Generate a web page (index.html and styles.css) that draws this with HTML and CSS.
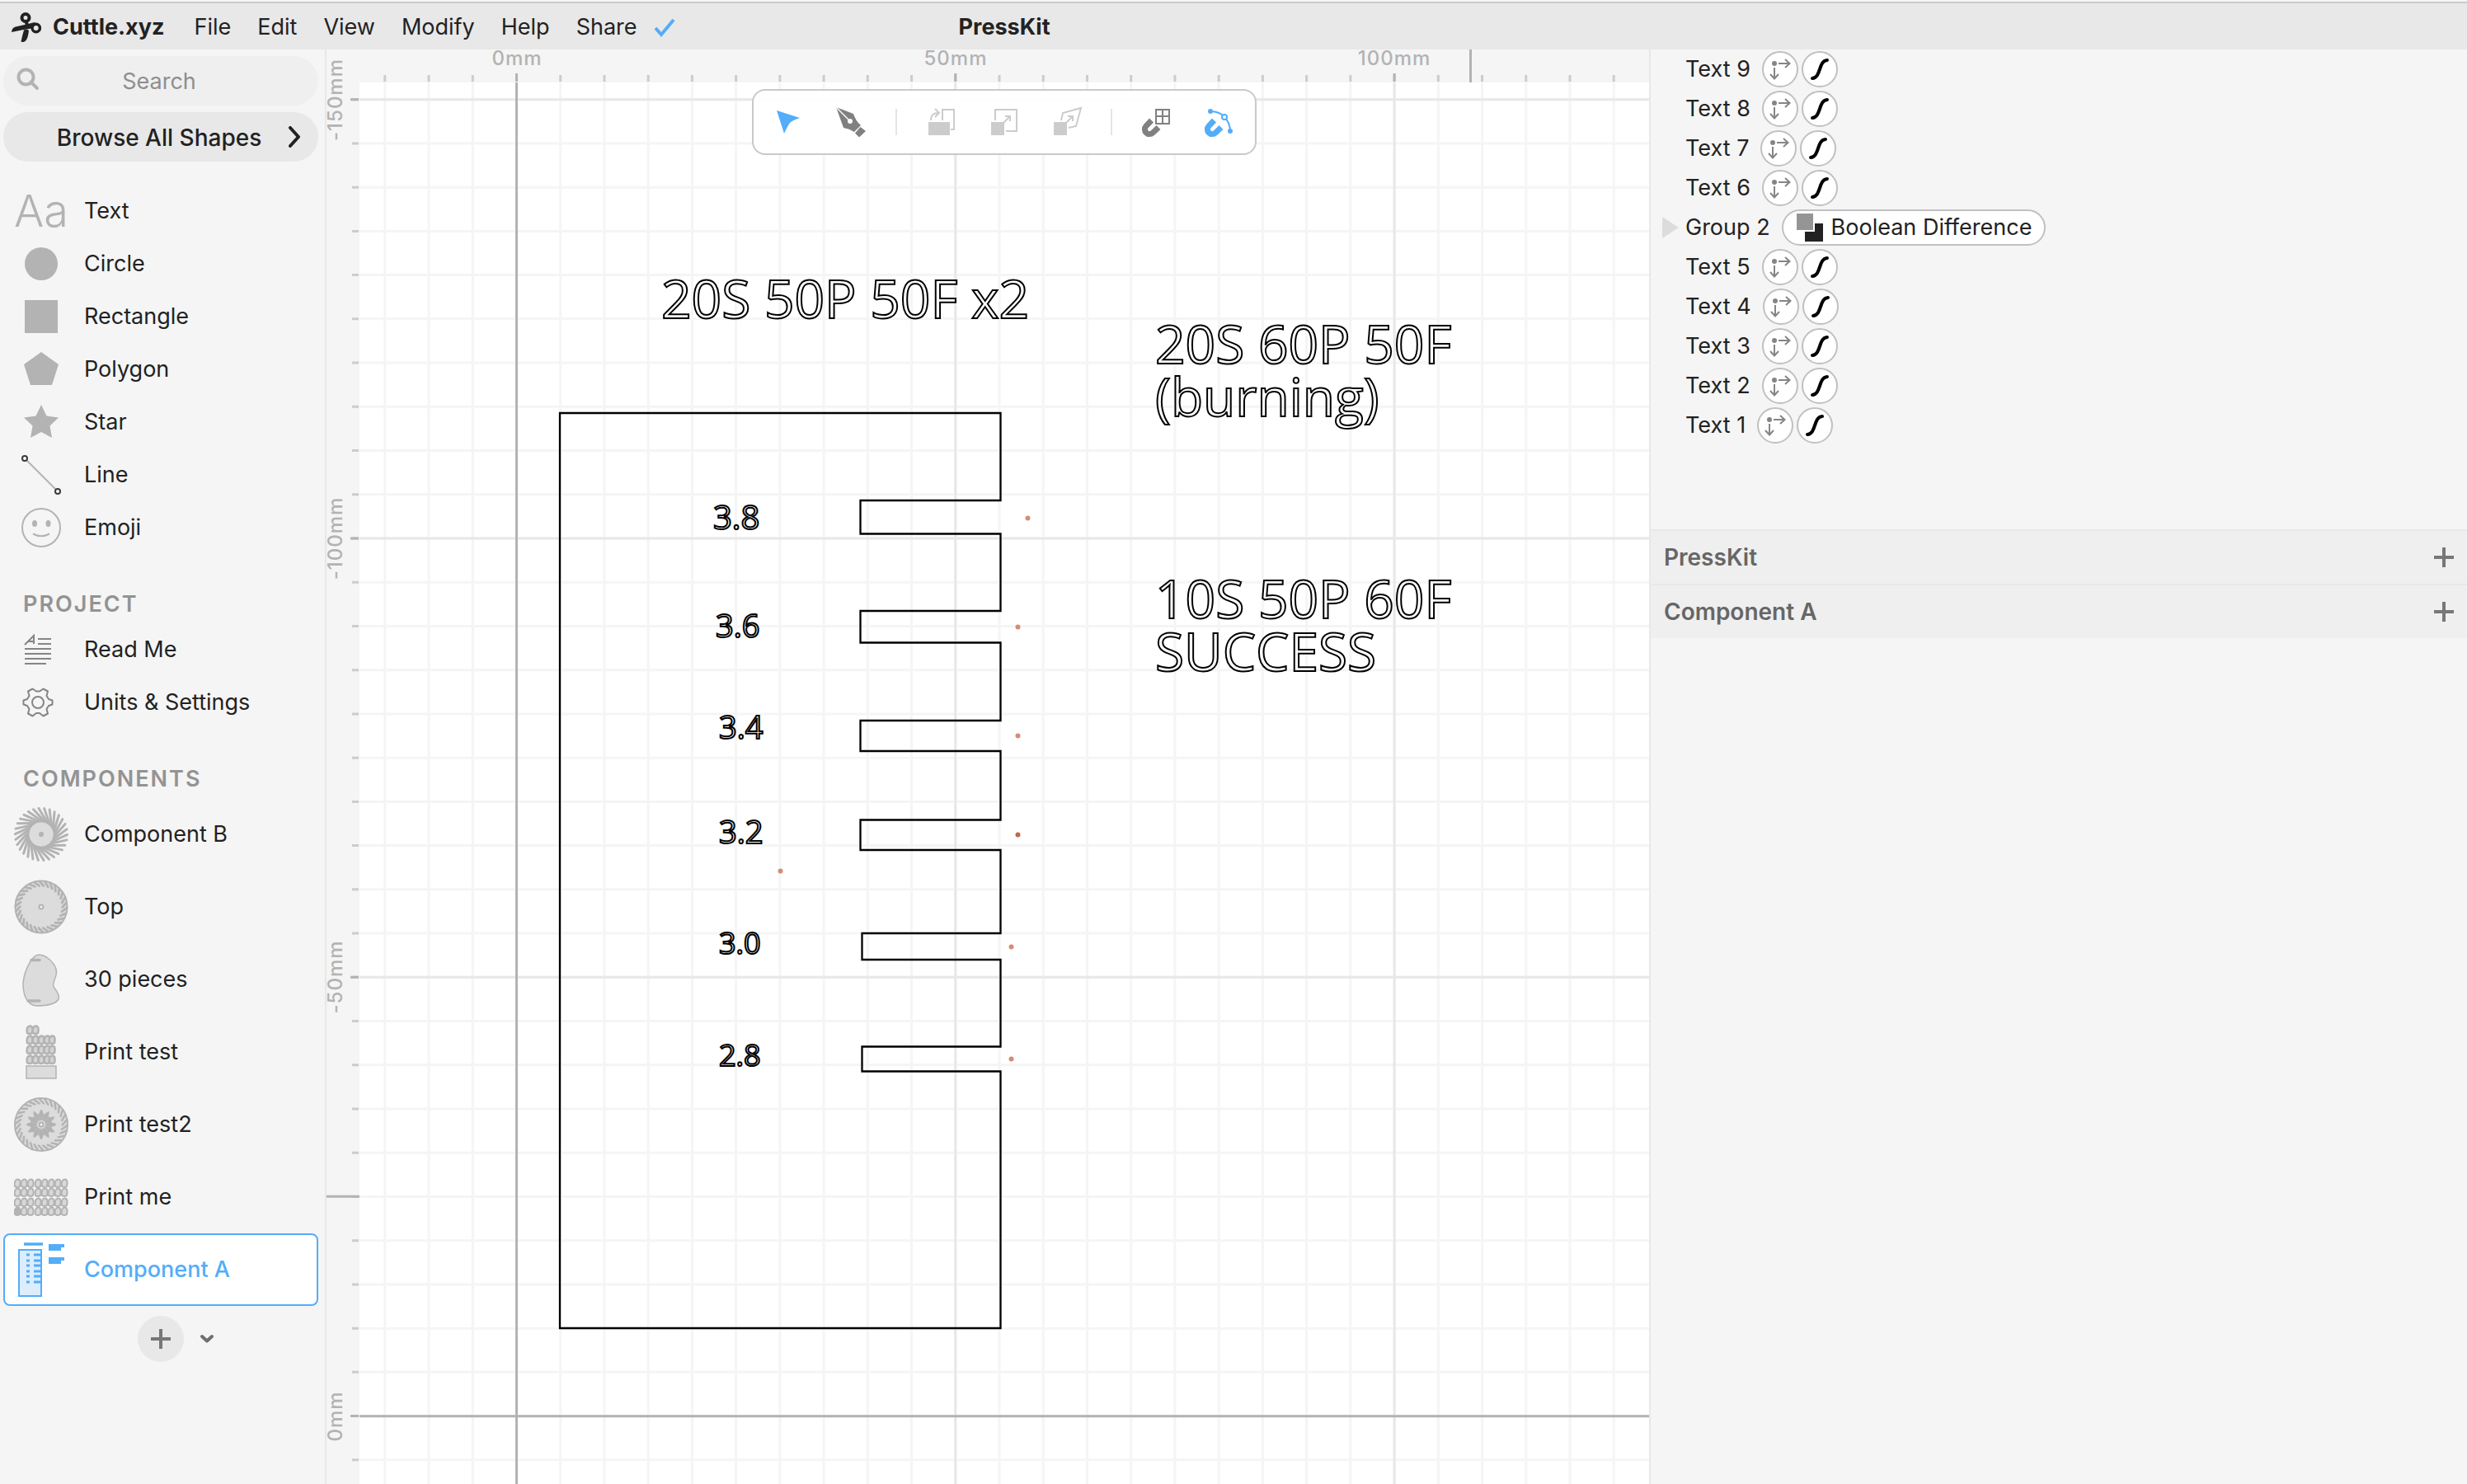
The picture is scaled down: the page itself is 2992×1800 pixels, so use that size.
FILE: index.html
```html
<!DOCTYPE html>
<html lang="en">
<head>
<meta charset="utf-8">
<title>PressKit - Cuttle.xyz</title>
<link rel="stylesheet" href="styles.css">
</head>
<body>
<svg class="defs" aria-hidden="true">
  <defs>
    <g id="origin" fill="none" stroke="#858585" stroke-width="2">
      <circle cx="15" cy="15" r="3" fill="#858585" stroke="none"/>
      <path d="M20 15H33M28 10l5.500 5-5.500 5M15 20V33M10 28l5 5.500 5-5.500"/>
    </g>
    <path id="curve" d="M13 33C24 32 20 12 31 11" fill="none" stroke="#000" stroke-width="4" stroke-linecap="round"/>
    <g id="blade"><path d="M-3-31.500L8-13"/></g>
    <g id="blades6"><use href="#blade"/><use href="#blade" transform="rotate(12)"/><use href="#blade" transform="rotate(24)"/><use href="#blade" transform="rotate(36)"/><use href="#blade" transform="rotate(48)"/><use href="#blade" transform="rotate(60)"/></g>
    <g id="blades"><use href="#blades6"/><use href="#blades6" transform="rotate(72)"/><use href="#blades6" transform="rotate(144)"/><use href="#blades6" transform="rotate(216)"/><use href="#blades6" transform="rotate(288)"/></g>
    <g id="notch"><path d="M-2-31L3-25.500"/></g>
    <g id="notch6"><use href="#notch"/><use href="#notch" transform="rotate(12)"/><use href="#notch" transform="rotate(24)"/><use href="#notch" transform="rotate(36)"/><use href="#notch" transform="rotate(48)"/><use href="#notch" transform="rotate(60)"/></g>
    <g id="rim"><use href="#notch6"/><use href="#notch6" transform="rotate(72)"/><use href="#notch6" transform="rotate(144)"/><use href="#notch6" transform="rotate(216)"/><use href="#notch6" transform="rotate(288)"/></g>
    <g id="petal"><path d="M0-5Q4.500-12 0-18Q-4.500-12 0-5Z"/></g>
    <g id="petal4"><use href="#petal"/><use href="#petal" transform="rotate(90)"/><use href="#petal" transform="rotate(180)"/><use href="#petal" transform="rotate(270)"/></g>
    <g id="bean"><path d="M0-4.500C4-5 4 0 3 4Q0 6-3 4C-4 0-3-4 0-4.500Z"/></g>
    <g id="bean5"><use href="#bean"/><use href="#bean" x="7"/><use href="#bean" x="14"/><use href="#bean" x="21"/><use href="#bean" x="27"/></g>
    <g id="bean8"><use href="#bean"/><use href="#bean" x="8"/><use href="#bean" x="16"/><use href="#bean" x="25"/><use href="#bean" x="33"/><use href="#bean" x="41"/><use href="#bean" x="49"/><use href="#bean" x="57"/></g>
    <path id="magnet" d="M17.500 22L11 28.800A5.800 5.800 0 0 0 19.200 37L26 30.500" fill="none" stroke-width="7"/>
  </defs>
</svg>

<header class="topbar">
  <a class="brand" href="#">
    <svg class="logo" viewBox="0 0 36 36"><g fill="none" stroke="#222"><circle cx="17" cy="6.500" r="4.500" stroke-width="4"/><circle cx="29.700" cy="19" r="4.700" stroke-width="3.500"/><path d="M17.500 11.500L19.500 16" stroke-width="4"/></g><path fill="#222" d="M0 24Q0 18 7 17L18 14.500 28 12l2 2.500-6 5Q12 21 0 24ZM15 21.500Q19 20 21 22Q20 31 17.500 34Q15 37 11.500 35.500Q13 28 15 21.500Z"/></svg>
    Cuttle.xyz</a>
  <nav class="menu">
    <button type="button">File</button>
    <button type="button">Edit</button>
    <button type="button">View</button>
    <button type="button">Modify</button>
    <button type="button">Help</button>
    <button type="button">Share</button>
  </nav>
  <svg class="saved" viewBox="0 0 26 26"><path d="M2 14L9 22L24 4" fill="none" stroke="#53adf9" stroke-width="4"/></svg>
  <h1 class="title">PressKit</h1>
</header>

<div class="workspace">
  <aside class="sidebar">
    <label class="search">
      <svg viewBox="0 0 28 28"><g fill="none" stroke="#b3b3b3" stroke-width="4"><circle cx="11.500" cy="11.500" r="9"/><path d="M17.500 17.500L25 25" stroke-linecap="round"/></g></svg>
      <input type="text" placeholder="Search" aria-label="Search">
    </label>
    <button class="browse" type="button"><span>Browse All Shapes</span>
      <svg viewBox="0 0 14 26"><path d="M2 2L12 13L2 24" fill="none" stroke="#222" stroke-width="4" stroke-linecap="round" stroke-linejoin="round"/></svg>
    </button>
    <div class="list shapes">
      <button class="item" type="button"><span class="icon aa">Aa</span>Text</button>
      <button class="item" type="button"><svg class="icon" viewBox="0 0 66 66"><circle cx="33" cy="33" r="20" fill="#b3b3b3"/></svg>Circle</button>
      <button class="item" type="button"><svg class="icon" viewBox="0 0 66 66"><path d="M13 13h40v40H13z" fill="#b3b3b3"/></svg>Rectangle</button>
      <button class="item" type="button"><svg class="icon" viewBox="0 0 66 66"><path d="M33 12L54 27L46 52H20L12 27Z" fill="#b3b3b3"/></svg>Polygon</button>
      <button class="item" type="button"><svg class="icon" viewBox="0 0 66 66"><path d="M33 12L39.500 25.500L54 27.500L43.500 37.500L46 52L33 45L20 52L22.500 37.500L12 27.500L26.500 25.500Z" fill="#b3b3b3"/></svg>Star</button>
      <button class="item" type="button"><svg class="icon" viewBox="0 0 66 66"><path d="M15 15L51 51" stroke="#b3b3b3" stroke-width="2"/><g fill="#fff" stroke="#3a3a3a" stroke-width="2"><circle cx="13" cy="13" r="3"/><circle cx="53" cy="53" r="3"/></g></svg>Line</button>
      <button class="item" type="button"><svg class="icon" viewBox="0 0 66 66"><circle cx="33" cy="33" r="23" fill="none" stroke="#b3b3b3" stroke-width="2"/><g fill="#b3b3b3"><ellipse cx="25" cy="28" rx="3" ry="4"/><ellipse cx="41.500" cy="28" rx="3" ry="4"/></g><path d="M23 40.500Q33 46 43 40.500" fill="none" stroke="#b3b3b3" stroke-width="2"/></svg>Emoji</button>
    </div>
    <h2 class="heading">PROJECT</h2>
    <div class="list">
      <button class="item" type="button"><svg class="icon" viewBox="0 0 66 66"><path d="M13 27L24 16V26M17 23h7M29 20h16M29 26h16M13 32h32M13 38h32M13 44h32M13 50h26" fill="none" stroke="#858585" stroke-width="2"/></svg>Read Me</button>
      <button class="item" type="button"><svg class="icon" viewBox="0 0 66 66"><g fill="none" stroke="#858585" stroke-width="2" stroke-linejoin="round"><circle cx="29" cy="33" r="7"/><path d="M22.500 16.500L27 19.500H31L35.500 16.500L41 19.500L39.500 25L42 29L46.500 30.500V35.500L42 37L39.500 41L41 46.500L35.500 49.500L31 46H27L22.500 49.500L17 46.500L18.500 41L16 37L11.500 35.500V30.500L16 29L18.500 25L17 19.500Z"/></g></svg>Units &amp; Settings</button>
    </div>
    <h2 class="heading">COMPONENTS</h2>
    <div class="list components">
      <button class="item" type="button"><svg class="icon" viewBox="0 0 66 66"><g transform="translate(33 33)" stroke="#b3b3b3"><use href="#blades" stroke-width="3" stroke-linecap="round"/><circle r="14.500" fill="#dcdcdc" stroke="none"/><circle r="3" fill="#b3b3b3" stroke="none"/></g></svg>Component B</button>
      <button class="item" type="button"><svg class="icon" viewBox="0 0 66 66"><g transform="translate(33 33)" stroke="#b3b3b3"><circle r="31.500" fill="#dcdcdc" stroke-width="2"/><use href="#rim" stroke-width="2.800" stroke-linecap="round"/><circle r="2.500" fill="#f5f5f5" stroke-width="2"/></g></svg>Top</button>
      <button class="item" type="button"><svg class="icon" viewBox="0 0 66 66"><path d="M20 11Q25 3 31 3Q40 4 47 13Q53 20 51 28Q47 38 48 42Q56 52 54 57Q49 65 27 65Q18 64 14 55Q11 48 11 38Q12 24 20 11Z" fill="#dcdcdc" stroke="#b3b3b3" stroke-width="1.500"/><path d="M21 9.500H31M17 59H31" stroke="#b3b3b3" stroke-width="3.500" stroke-linecap="round"/></svg>30 pieces</button>
      <button class="item" type="button"><svg class="icon" viewBox="0 0 66 66"><g fill="#d4d4d4" stroke="#b3b3b3" stroke-width="2.500"><use href="#bean" x="19" y="6"/><use href="#bean" x="26" y="6"/><use href="#bean5" x="19" y="18"/><use href="#bean5" x="19" y="30"/><use href="#bean5" x="19" y="42"/><path d="M15 50h36v15H15z" stroke-width="1.500" fill="#dcdcdc"/></g></svg>Print test</button>
      <button class="item" type="button"><svg class="icon" viewBox="0 0 66 66"><g transform="translate(33 33)" stroke="#b3b3b3"><circle r="32" fill="#dcdcdc" stroke-width="2"/><use href="#rim" stroke-width="2.500" stroke-linecap="round"/><circle r="12" fill="#c6c6c6" stroke-width="2"/><g fill="#b3b3b3" stroke-width="1"><use href="#petal4"/><use href="#petal4" transform="rotate(30)"/><use href="#petal4" transform="rotate(60)"/></g><circle r="5" fill="#dcdcdc" stroke="none"/><circle r="2.500" fill="#f5f5f5" stroke-width="2"/></g></svg>Print test2</button>
      <button class="item" type="button"><svg class="icon" viewBox="0 0 66 66"><g fill="#d8d8d8" stroke="#b3b3b3" stroke-width="2"><use href="#bean8" x="4" y="16"/><use href="#bean8" x="4" y="27"/><use href="#bean8" x="4" y="39"/><use href="#bean8" x="4" y="50"/></g><path d="M1 46h6v9H1z" fill="#b3b3b3"/></svg>Print me</button>
      <button class="item selected" type="button"><svg class="icon" viewBox="0 0 66 66"><g stroke="#53adf9"><path d="M6 9h27v56H6z" fill="#dcedfd" stroke-width="2"/><path d="M12 2h23" stroke-width="3.500"/><path d="M42 4h19M42 8h15M42 20h19M42 24h15" stroke-width="4"/><path d="M24 15h9M24 22h9M24 28h9M24 35h9M24 41h9M24 48h9M15 15h4M15 22h4M15 28h4M15 35h4M15 41h4M15 48h4" stroke-width="3"/></g></svg>Component A</button>
    </div>
    <div class="add-row">
      <button class="add" type="button" aria-label="Add component"><svg viewBox="0 0 24 24"><path d="M12 0V24M0 12H24" stroke="#777" stroke-width="4"/></svg></button>
      <button class="more" type="button" aria-label="More component options"><svg viewBox="0 0 16 16"><path d="M2 5L8 10.500L14 5" fill="none" stroke="#6f6f6f" stroke-width="4" stroke-linecap="round" stroke-linejoin="round"/></svg></button>
    </div>
  </aside>

  <main class="stage">
    <svg class="canvas">
      <rect x="40" y="40" width="100%" height="100%" fill="#fff"/>
      <!-- 5 mm grid: each very wide dashed stroke paints one family of lines -->
      <g fill="none">
        <path d="M69.300 2040H4000" stroke="#f5f5f5" stroke-width="4000" stroke-dasharray="3 50.230"/>
        <path d="M2040 59.200V4000" stroke="#f5f5f5" stroke-width="4000" stroke-dasharray="3 50.230"/>
        <path d="M761.300 2040H4000" stroke="#e8e8e8" stroke-width="4000" stroke-dasharray="3 529.300"/>
        <path d="M2040 59.200V4000" stroke="#e8e8e8" stroke-width="4000" stroke-dasharray="3 529.300"/>
        <path d="M230.500 40V4000M40 1657.700H4000" stroke="#b3b3b3" stroke-width="3"/>
        <path d="M69.300 35H4000" stroke="#ccc" stroke-width="8" stroke-dasharray="3 50.230"/>
        <path d="M35 59.200V4000" stroke="#ccc" stroke-width="8" stroke-dasharray="3 50.230"/>
        <path d="M229 34H4000" stroke="#b3b3b3" stroke-width="10" stroke-dasharray="3 529.300"/>
        <path d="M34 59.200V4000" stroke="#b3b3b3" stroke-width="10" stroke-dasharray="3 529.300"/>
        <path d="M1387.500 0V40M0 1391.300H40" stroke="#b3b3b3" stroke-width="3"/>
      </g>
      <g class="ruler-text">
        <text x="231" y="19">0mm</text>
        <text x="763" y="19">50mm</text>
        <text x="1295" y="19">100mm</text>
        <text transform="translate(19 61) rotate(-90)">-150mm</text>
        <text transform="translate(19 593) rotate(-90)">-100mm</text>
        <text transform="translate(19 1125) rotate(-90)">-50mm</text>
        <text transform="translate(19 1658) rotate(-90)">0mm</text>
      </g>
      <path d="M283 441H817.500V547H647.500V587.500H817.500V681H647.500V719.500H817.500V814H647.500V851H817.500V934.500H647.500V971H817.500V1072H649.500V1104H817.500V1209.500H649.500V1239.500H817.500V1551H283Z" fill="none" stroke="#000" stroke-width="2.300"/>
      <g class="engraving">
        <text x="406" y="326">20S 50P 50F x2</text>
        <text x="1005" y="381">20S 60P 50F</text>
        <text x="1005" y="445">(burning)</text>
        <text x="1005" y="690">10S 50P 60F</text>
        <text x="1005" y="754">SUCCESS</text>
        <text class="size-40" x="469" y="582">3.8</text>
        <text class="size-38" x="472" y="713">3.6</text>
        <text class="size-38" x="476" y="836">3.4</text>
        <text class="size-38" x="476" y="963">3.2</text>
        <text class="size-36" x="476" y="1097">3.0</text>
        <text class="size-36" x="476" y="1233">2.8</text>
      </g>
      <g fill="#d48c78">
        <circle cx="850.500" cy="568.500" r="3"/><circle cx="838.500" cy="700.500" r="3"/><circle cx="838.500" cy="832.500" r="3"/><circle cx="838.500" cy="952.500" r="3" fill="#c4654a"/><circle cx="550.500" cy="996.500" r="3"/><circle cx="830.500" cy="1088.500" r="3"/><circle cx="830.500" cy="1224.500" r="3"/>
      </g>
    </svg>
    <div class="toolbar" role="toolbar" aria-label="Tools">
      <button type="button" aria-label="Select"><svg viewBox="0 0 48 48"><path d="M9 10L37 19Q28 22 25 25Q22 29 18 38Z" fill="#53adf9"/></svg></button>
      <button type="button" aria-label="Pen"><svg viewBox="0 0 48 48"><g fill="#808080"><path d="M5 6L26 14Q29 23 35 28L27 36Q21 32 14 31Z"/><path d="M34.500 30L41 35L33 42.500L28 37.500Z"/></g><path d="M5 6L20 21" stroke="#fff" stroke-width="1.500"/><circle cx="22" cy="23" r="3" fill="#fff"/></svg></button>
      <span class="sep"></span>
      <button type="button" aria-label="Rotate"><svg viewBox="0 0 48 48"><path d="M8 24h26v16H8z" fill="#ccc"/><path d="M25 22V9H39V33H35M11 22V20Q12 13 20 13M16 8l5 5-5 5" fill="none" stroke="#ccc" stroke-width="2"/></svg></button>
      <button type="button" aria-label="Scale"><svg viewBox="0 0 48 48"><path d="M8 24h16v16H8z" fill="#ccc"/><path d="M13 22V9H39V35H26M23 25L31 17M25 17H31V23" fill="none" stroke="#ccc" stroke-width="2"/></svg></button>
      <button type="button" aria-label="Skew"><svg viewBox="0 0 48 48"><path d="M8 24h16v16H8z" fill="#ccc"/><path d="M17 22L19 13L41 7L35 29L26 31M23 25L31 17M25 17H31V23" fill="none" stroke="#ccc" stroke-width="2"/></svg></button>
      <span class="sep"></span>
      <button type="button" aria-label="Snap to grid"><svg viewBox="0 0 48 48"><use href="#magnet" stroke="#808080"/><path d="M23 9H39V26H23ZM31 9V26M23 17H39" fill="none" stroke="#808080" stroke-width="2"/></svg></button>
      <button type="button" aria-label="Snap to geometry"><svg viewBox="0 0 48 48"><use href="#magnet" stroke="#53adf9"/><path d="M13 11Q24 11 30 18Q37 25 37 35" fill="none" stroke="#53adf9" stroke-width="2"/><circle cx="13" cy="11" r="3" fill="#53adf9"/><circle cx="37" cy="35" r="3" fill="#53adf9"/><circle cx="30" cy="18" r="3" fill="#fff" stroke="#53adf9" stroke-width="2"/></svg></button>
    </div>
  </main>

  <aside class="panel">
    <ul class="layers">
      <li>Text 9 <button type="button" aria-label="Transform"><svg viewBox="2 2 40 40"><use href="#origin"/></svg></button><button type="button" aria-label="Stroke"><svg viewBox="2 2 40 40"><use href="#curve"/></svg></button></li>
      <li>Text 8 <button type="button" aria-label="Transform"><svg viewBox="2 2 40 40"><use href="#origin"/></svg></button><button type="button" aria-label="Stroke"><svg viewBox="2 2 40 40"><use href="#curve"/></svg></button></li>
      <li>Text 7 <button type="button" aria-label="Transform"><svg viewBox="2 2 40 40"><use href="#origin"/></svg></button><button type="button" aria-label="Stroke"><svg viewBox="2 2 40 40"><use href="#curve"/></svg></button></li>
      <li>Text 6 <button type="button" aria-label="Transform"><svg viewBox="2 2 40 40"><use href="#origin"/></svg></button><button type="button" aria-label="Stroke"><svg viewBox="2 2 40 40"><use href="#curve"/></svg></button></li>
      <li class="group"><svg class="twisty" viewBox="0 0 20 26"><path d="M0 0L20 13L0 26Z" fill="#dcdcdc"/></svg>Group 2 <button class="pill" type="button"><svg viewBox="0 0 34 34"><path d="M10 12h22v22H10z" fill="#222"/><path d="M0 0h22v22H0z" fill="#fff"/><path d="M0 0h20v20H0z" fill="#959595"/></svg>Boolean Difference</button></li>
      <li>Text 5 <button type="button" aria-label="Transform"><svg viewBox="2 2 40 40"><use href="#origin"/></svg></button><button type="button" aria-label="Stroke"><svg viewBox="2 2 40 40"><use href="#curve"/></svg></button></li>
      <li>Text 4 <button type="button" aria-label="Transform"><svg viewBox="2 2 40 40"><use href="#origin"/></svg></button><button type="button" aria-label="Stroke"><svg viewBox="2 2 40 40"><use href="#curve"/></svg></button></li>
      <li>Text 3 <button type="button" aria-label="Transform"><svg viewBox="2 2 40 40"><use href="#origin"/></svg></button><button type="button" aria-label="Stroke"><svg viewBox="2 2 40 40"><use href="#curve"/></svg></button></li>
      <li>Text 2 <button type="button" aria-label="Transform"><svg viewBox="2 2 40 40"><use href="#origin"/></svg></button><button type="button" aria-label="Stroke"><svg viewBox="2 2 40 40"><use href="#curve"/></svg></button></li>
      <li>Text 1 <button type="button" aria-label="Transform"><svg viewBox="2 2 40 40"><use href="#origin"/></svg></button><button type="button" aria-label="Stroke"><svg viewBox="2 2 40 40"><use href="#curve"/></svg></button></li>
    </ul>
    <section class="section"><h2>PressKit</h2><button type="button" aria-label="Add to PressKit"><svg viewBox="0 0 24 24"><path d="M12 0V24M0 12H24" stroke="#777" stroke-width="4"/></svg></button></section>
    <section class="section"><h2>Component A</h2><button type="button" aria-label="Add to Component A"><svg viewBox="0 0 24 24"><path d="M12 0V24M0 12H24" stroke="#777" stroke-width="4"/></svg></button></section>
  </aside>
</div>
</body>
</html>
```

FILE: styles.css
```css
* {
  box-sizing: border-box;
}

body {
  margin: 0;
  min-height: 100vh;
  display: flex;
  flex-direction: column;
  background: #f5f5f5;
  color: #222;
  font: 400 27px/32px Inter, "Liberation Sans", sans-serif;
}

button {
  border: 0;
  margin: 0;
  padding: 0;
  background: none;
  color: inherit;
  font: inherit;
}

svg {
  display: block;
  flex: none;
}

.defs {
  position: absolute;
  width: 0;
  height: 0;
}

/* Top bar */
.topbar {
  display: flex;
  align-items: center;
  height: 58px;
  margin-top: 2px;
  padding: 2px 0 0 14px;
  border-top: 2px solid #c9c9c9;
  background: #e8e8e8;
}

.brand {
  display: flex;
  align-items: center;
  gap: 14px;
  color: inherit;
  font-weight: 700;
  text-decoration: none;
}

.logo {
  width: 36px;
  height: 36px;
}

.menu {
  display: flex;
  gap: 32px;
  margin-left: 36px;
}

.saved {
  width: 26px;
  height: 26px;
  margin-left: 20px;
}

.title {
  margin: 0 0 0 344px;
  font-size: 27px;
  font-weight: 700;
}

.workspace {
  flex: 1;
  display: flex;
}

/* Left sidebar */
.sidebar {
  flex: none;
  width: 396px;
  padding: 8px 8px 8px 4px;
  border-right: 2px solid #e8e8e8;
}

.search {
  display: flex;
  align-items: center;
  height: 60px;
  padding: 0 16px;
  border-radius: 30px;
  background: #efefef;
}

.search svg {
  width: 28px;
  height: 28px;
  margin-bottom: 4px;
}

.search input {
  flex: 1;
  min-width: 0;
  padding: 2px 32px 0 0;
  border: 0;
  background: none;
  font: inherit;
  text-align: center;
}

.search input::placeholder {
  color: #8e8e8e;
  opacity: 1;
}

.browse {
  display: flex;
  align-items: center;
  width: 100%;
  height: 60px;
  margin-top: 8px;
  padding: 0 22px 0 32px;
  border-radius: 30px;
  background: #e8e8e8;
  font-size: 28px;
  font-weight: 500;
}

.browse span {
  flex: 1;
  padding-top: 2px;
}

.browse svg {
  width: 14px;
  height: 26px;
}

.list {
  display: flex;
  flex-direction: column;
}

.shapes {
  margin-top: 28px;
}

.item {
  display: flex;
  align-items: center;
  gap: 19px;
  height: 64px;
  padding-left: 11px;
  border: 2px solid transparent;
  border-radius: 8px;
  text-align: left;
}

.icon {
  width: 66px;
  height: 66px;
}

.aa {
  flex: none;
  color: #b3b3b3;
  font-size: 54px;
  font-weight: 300;
  line-height: 66px;
  text-align: center;
}

.components .item {
  height: 88px;
}

.item.selected {
  border-color: #53adf9;
  background: #fff;
  color: #53adf9;
  font-weight: 500;
}

.heading {
  height: 84px;
  margin: 0;
  padding: 45px 0 0 24px;
  color: #939393;
  font-size: 27px;
  font-weight: 600;
  letter-spacing: 2px;
}

.add-row {
  display: flex;
  align-items: center;
  gap: 12px;
  margin: 12px 0 0 163px;
}

.add,
.more {
  display: grid;
  place-items: center;
  width: 56px;
  height: 56px;
  border-radius: 50%;
}

.add {
  background: #e8e8e8;
}

.more {
  width: 32px;
}

.add svg {
  width: 24px;
  height: 24px;
}

.more svg {
  width: 16px;
  height: 16px;
}

/* Drawing area */
.stage {
  flex: 1;
  display: flex;
  position: relative;
  min-width: 0;
}

.canvas {
  flex: 1;
  min-width: 0;
  overflow: hidden;
}

.ruler-text {
  fill: #b3b3b3;
  font-size: 24px;
  font-weight: 500;
  letter-spacing: 1px;
  text-anchor: middle;
}

.engraving {
  fill: none;
  stroke: #000;
  stroke-width: 2px;
  font-family: "Open Sans", "Noto Sans", sans-serif;
  font-size: 64px;
}

.size-40 {
  font-size: 40px;
}

.size-38 {
  font-size: 38px;
}

.size-36 {
  font-size: 36px;
}

.toolbar {
  position: absolute;
  top: 48px;
  left: calc(50% + 20px);
  display: flex;
  align-items: center;
  height: 80px;
  padding: 0 5px;
  transform: translateX(-50%);
  border: 2px solid #c9c9c9;
  border-radius: 16px;
  background: rgba(255, 255, 255, 0.95);
}

.toolbar button {
  display: grid;
  place-items: center;
  width: 76px;
  height: 76px;
}

.toolbar svg {
  width: 48px;
  height: 48px;
}

.sep {
  width: 2px;
  height: 32px;
  margin: 0 16px 0 15px;
  background: #e5e5e5;
}

/* Right panel */
.panel {
  flex: none;
  width: 992px;
  border-left: 2px solid #e8e8e8;
}

.layers {
  margin: 0;
  padding: 0 0 102px 42px;
  list-style: none;
}

.layers li {
  display: flex;
  align-items: center;
  gap: 4px;
  height: 48px;
}

.layers button {
  flex: none;
  width: 44px;
  height: 44px;
  border: 2px solid #c0c0c0;
  border-radius: 22px;
  background: #fff;
}

.layers button:first-of-type {
  margin-left: 10px;
}

.layers button svg {
  width: 40px;
  height: 40px;
}

.twisty {
  width: 20px;
  height: 26px;
  margin: 0 4px 0 -28px;
}

.layers .pill {
  display: flex;
  align-items: center;
  gap: 8px;
  width: auto;
  padding: 0 15px 0 16px;
}

.layers .pill svg {
  width: 34px;
  height: 34px;
}

.section {
  display: flex;
  align-items: center;
  justify-content: space-between;
  height: 66px;
  padding: 0 16px;
  border-top: 2px solid #e8e8e8;
  background: #efefef;
}

.section h2 {
  margin: 0;
  color: #666;
  font-size: 28px;
  font-weight: 600;
}

.section svg {
  width: 24px;
  height: 24px;
}
```
